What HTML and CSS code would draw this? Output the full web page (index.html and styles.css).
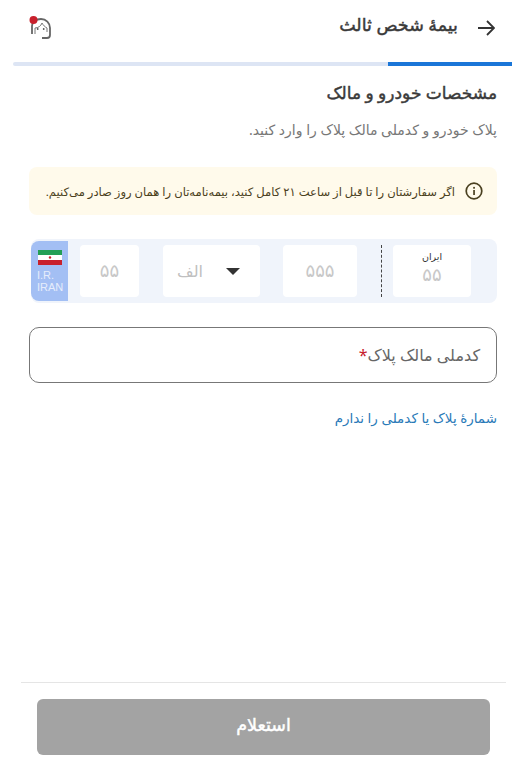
FILE: index.html
```html
<!DOCTYPE html>
<html lang="fa" dir="rtl">
<head>
<meta charset="utf-8">
<title>بیمهٔ شخص ثالث</title>
<link rel="stylesheet" href="styles.css">
</head>
<body>
<div class="page">
  <header class="topbar">
    <div class="title-group">
      <svg class="back" viewBox="0 0 18 16" width="18" height="16" aria-hidden="true"><path d="M1 8H17M10 1L17 8L10 15" fill="none" stroke="#333" stroke-width="1.8"/></svg>
      <h1 class="title">بیمهٔ شخص ثالث</h1>
    </div>
    <svg class="support" viewBox="0 0 26 26" width="26" height="26" aria-hidden="true">
      <path d="M4 19V11C4 7 8 4 13 4C18 4 22 8 22 13V20C22 22 21 23 19 23H14" fill="none" stroke="#666" stroke-width="1.8"/>
      <path d="M7 19V13C10 13 13 11 14 8C15 10 17 12 19 13V17" fill="none" stroke="#777" stroke-width="1"/>
      <circle cx="9.7" cy="14" r="0.9" fill="#555"/><circle cx="15.7" cy="14" r="0.9" fill="#555"/>
      <circle cx="5.5" cy="5" r="4" fill="#c8202c"/>
    </svg>
  </header>
  <div class="progress"><div class="progress-fill"></div></div>
  <main class="content">
    <h2 class="heading">مشخصات خودرو و مالک</h2>
    <p class="sub">پلاک خودرو و کدملی مالک پلاک را وارد کنید.</p>
    <div class="notice">
      <svg viewBox="0 0 18 18" width="18" height="18" aria-hidden="true"><circle cx="9" cy="9" r="7.8" fill="none" stroke="#4a4020" stroke-width="1.7"/><rect x="8.2" y="8" width="1.7" height="5" fill="#4a4020"/><rect x="8.2" y="4.9" width="1.7" height="1.8" fill="#4a4020"/></svg>
      <span>اگر سفارشتان را تا قبل از ساعت ۲۱ کامل کنید، بیمه‌نامه‌تان را همان روز صادر می‌کنیم.</span>
    </div>
    <div class="plate">
      <div class="box box-iran"><span class="iran">ایران</span><span class="num">۵۵</span></div>
      <div class="dash"></div>
      <div class="box box-3"><span class="num">۵۵۵</span></div>
      <div class="box box-letter"><i class="caret"></i><span class="letter">الف</span></div>
      <div class="box box-2"><span class="num">۵۵</span></div>
      <div class="flag-part">
        <svg viewBox="0 0 24 15" width="24" height="15" aria-hidden="true"><rect width="24" height="5" fill="#239f56"/><rect y="5" width="24" height="5" fill="#fff"/><rect y="10" width="24" height="5" fill="#c8202c"/><circle cx="12" cy="7.5" r="1.2" fill="#c8202c"/></svg>
        <span class="ir">I.R.<br>IRAN</span>
      </div>
    </div>
    <div class="field"><span class="label">کدملی مالک پلاک</span><span class="star">*</span></div>
    <a class="link" href="#">شمارهٔ پلاک یا کدملی را ندارم</a>
  </main>
  <footer class="footer">
    <button class="submit" type="button">استعلام</button>
  </footer>
</div>
</body>
</html>
```
FILE: styles.css
```css
* { box-sizing: border-box; }
html, body { margin: 0; padding: 0; background: #fff; }
body { font-family: "Noto Sans", "DejaVu Sans", sans-serif; color: #333; }
.page { width: 524px; height: 764px; display: flex; flex-direction: column; }
.topbar { height: 62px; display: flex; justify-content: space-between; align-items: center; padding: 0 29px 6px 28px; }
.title-group { display: flex; align-items: center; gap: 19px; }
.title { margin: -8px 0 0; font-size: 17.5px; font-weight: 400; -webkit-text-stroke: 0.45px #3a3a3a; color: #3a3a3a; }
.support { margin-top: 0; }
.progress { height: 4px; margin: 0 12px 0 13px; background: #dde5f4; border-radius: 2px; }
.progress-fill { width: 124px; height: 4px; background: #1a76d8; }
.content { flex: 1; padding: 0 27px 0 29px; display: flex; flex-direction: column; }
.heading { margin: 14px 0 0; height: 26px; line-height: 26px; font-size: 17px; font-weight: 400; -webkit-text-stroke: 0.45px #3a3a3a; color: #3a3a3a; }
.sub { margin: 13px 0 0; height: 22px; line-height: 22px; font-size: 14px; color: #777; }
.notice { margin-top: 26px; height: 48px; background: #fffaeb; border-radius: 8px; display: flex; align-items: center; gap: 10px; padding: 0 14px; font-size: 11.55px; color: #4a4020; }
.plate { margin-top: 24px; height: 64px; background: #f0f4fb; border-radius: 8px; display: flex; align-items: center; padding-right: 26px; margin-left: 2px; }
.box { background: #fff; border-radius: 4px; height: 52px; display: flex; align-items: center; justify-content: center; }
.box-iran { width: 78px; flex-direction: column; padding-bottom: 4px; }
.iran { font-size: 9.5px; line-height: 10px; color: #333; }
.num { font-size: 18px; line-height: 24px; color: #c8c8c8; }
.box-3 .num, .box-2 .num { margin-top: -2px; }
.dash { width: 0; height: 52px; border-right: 1px dashed #444; margin: 0 11px 0 24px; }
.box-3 { width: 74px; margin-left: 23px; }
.box-letter { width: 97px; margin-left: 24px; gap: 23px; justify-content: flex-start; padding-right: 20px; }
.caret { width: 0; height: 0; border-left: 7px solid transparent; border-right: 7px solid transparent; border-top: 7px solid #333; }
.letter { font-size: 16px; color: #c0c0c0; }
.box-2 { width: 59px; }
.flag-part { margin-right: 12px; margin-left: auto; align-self: center; width: 37px; height: 60px; background: #a3bff4; border-top-left-radius: 8px; border-bottom-left-radius: 8px; display: flex; flex-direction: column; align-items: center; padding-top: 9px; }
.ir { direction: ltr; font-family: "Liberation Sans", sans-serif; font-size: 11px; line-height: 12px; color: #e6edfb; margin-top: 4px; width: 25px; text-align: left; }
.field { margin-top: 24px; height: 56px; border: 1px solid #777; border-radius: 10px; display: flex; align-items: center; padding: 0 16px; font-size: 16px; color: #666; }
.star { color: #c8202c; }
.link { margin-top: 24px; font-size: 13.5px; line-height: 22px; color: #2a7ab8; text-decoration: none; }
.footer { margin: 0 18px 0 21px; height: 82px; border-top: 1px solid #e5e5e5; padding: 16px 16px 0; }
.submit { display: block; width: 100%; height: 56px; border: 0; border-radius: 6px; background: #a3a3a3; color: #fff; padding: 0 0 6px; font: 400 17.5px "Noto Sans", "DejaVu Sans", sans-serif; -webkit-text-stroke: 0.45px #fff; }
```
